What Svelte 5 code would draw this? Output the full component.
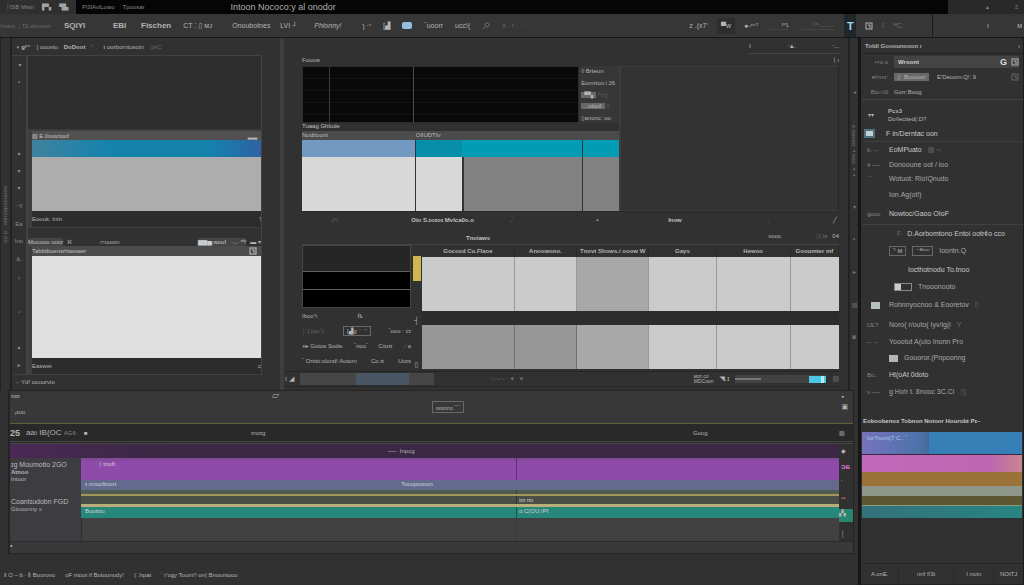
<script lang="ts">
  type Row = { lead: string; text: string; extra?: string; size: string; kind?: string };

  const columns = [
    { label: 'Gocosd Cu.Flaoe', width: 92, tone: 'light' },
    { label: 'Anoowono.', width: 62, tone: 'light' },
    { label: 'Tnovt Shows./ ooow W', width: 72, tone: 'mid' },
    { label: 'Gays', width: 67, tone: 'light' },
    { label: 'Hewoo', width: 74, tone: 'light' },
    { label: 'Gooumter mf', width: 48, tone: 'light' }
  ];
  const total = columns.reduce((sum, c) => sum + c.width, 0);

  const rows: Row[] = [
    { lead: '', text: 'F in/Derntac oon', size: 'h16', kind: 'active' },
    { lead: 'b.  –', text: 'EoMPuato', extra: '▧  ▫▫', size: 'h16', kind: 'bright' },
    { lead: '4 ──', text: 'Donooune oot / ioo', size: 'h14' },
    { lead: '  ·‾', text: 'Wotuot: Rio!Qnudo', size: 'h14' },
    { lead: '·', text: 'Ion.Ag(ot!)', size: 'h18' },
    { lead: 'gooo', text: 'Nowtoc/Gaoo OIoF', size: 'h20', kind: 'bright' },
    { lead: '', text: 'D.Aorbomtono Entoi ootr¢o cco', size: 'h18', kind: 'deep' },
    { lead: '', text: 'Ioontn.Q', size: 'h18', kind: 'chips' },
    { lead: '', text: 'Iocthotnodu To.tnoo', size: 'h20', kind: 'section' },
    { lead: '', text: 'Tnooonooto', size: 'h14', kind: 'toggle' },
    { lead: '', text: 'Rohnnyocnoo & Eooretov', extra: '▯', size: 'h22', kind: 'folder' },
    { lead: 'IJL?', text: 'Noro( r/outo( Iyv/ig(i', extra: 'Y', size: 'h18' },
    { lead: '–·  –', text: 'Yoootut A(uto Inonn Pro', size: 'h16' },
    { lead: '', text: 'Gouoror.(Pnpoonng', size: 'h16', kind: 'swatch' },
    { lead: 'Bo.:', text: 'Ht(oAt 0doto', size: 'h18', kind: 'bright' },
    { lead: 'x ──', text: 'g  Ho!r t. 8nooc 3C.Ci', extra: '▯|', size: 'h16' }
  ];

  const footer = ['‖ O – b · ⦀  Boorovo', 'oF ntoot if Botounody!', '(˙.hpat', "‘ r'ogy  Toum!! on( Bnoontooo"];

  let shot = $state('Wroont');
</script>

{#snippet box()}
  <svg class="ico" viewBox="0 0 8 8" aria-hidden="true"><rect x="1" y="1" width="6" height="6" /><path d="M3 3h2v3" /></svg>
{/snippet}

<div class="app">
  <header class="titlebar">
    <div class="corner"><span>┆ISB Mstn</span><b>▛▚</b><b>▜▙</b></div>
    <span class="menu">Pi3lAvlLowo</span><span class="menu">Tpoosar</span>
    <h1>Intoon Nococo:y al onodor</h1>
    <div class="corner end"><span>▴</span><span>≡</span></div>
  </header>

  <nav class="toolbar">
    <div class="tools">
      <span class="dim lead-in">Inosuo, ┆ TE ottonoonr</span>
      <button class="strong w46">SQIYI</button>
      <button class="strong w24">EBI</button>
      <button class="strong">Fischen</button>
      <button class="w46">CT ⁚ ▯ ᴍᴊ</button>
      <button class="w40">Onoubotnes</button>
      <button class="w28">LVI ┘</button>
      <button class="w40"><em>Phionny!</em></button>
      <button>ɿ ·ᵛ</button>
      <button>[▟</button>
      <button class="chip" aria-label="View"></button>
      <button>‾uoorr</button>
      <button>ucc!(</button>
      <button class="dim">
        <svg class="ico" viewBox="0 0 8 8" aria-hidden="true"><circle cx="5" cy="3" r="2" /><path d="M4 4L1 7" /></svg>
      </button>
      <span class="dim">x . › ː ː ː</span>
    </div>
    <div class="tools right">
      <button>z .(x7‘</button>
      <button class="tile">▀w</button>
      <button>●‑ᶜˢᵀ</button>
      <button class="field">ʸᶻʟ</button>
      <button class="field dim">˥ᵒᴸ.,…‑˙</button>
      <button class="cyan">T</button>
      <button>{@render box()}</button>
      <button>⫶</button>
      <button class="dim">ᴹC‥·</button>
      <div class="toolend"><span>ı</span><span>ᴍ</span></div>
    </div>
  </nav>

  <div class="body">
    <main>
      <div class="panels">
        <div class="rail"><span>oonosodoouoo · o oo</span></div>
        <section class="source">
          <div class="tabs"><b>◖ ɡᶜ⁺</b><span>[ ooovto</span><b>DoDoot</b><span class="dim">ᴸ‧.</span><span>ɪ oorborntosotn</span><span class="dim">▯AC</span></div>
          <div class="gutter">
            <span>˙▾</span><span>▪</span><span>:</span><span></span><span></span><span>▴</span><span>▾</span><span>▾</span><span>⊣I</span><span>Ea</span><span>Ino</span><span>&.</span>
            <span>ᵧ</span><span></span><span>▫</span><span></span><span>▴</span><span>▸</span>
          </div>
          <div class="stack">
            <div class="empty"></div>
            <article class="card">
              <h2><span>▧ E.ilnotctoof</span><i>▂▂</i></h2>
              <div class="band blue"></div>
              <div class="slab grey"></div>
              <p><span>Eoouk. Inin</span><span>˥</span></p>
            </article>
            <div class="bar">
              <button class="grow">Mooooo ooor</button><span>ℵ</span>
              <button class="wide">▱ouom</button>
              <button class="lit">▆▆▅.wouf &nbsp; ·‥· ᵒᵗʸ</button><span>▬ ▾</span>
            </div>
            <article class="card">
              <h2 class="plain"><span>Tabbtboensrhteower</span><i>{@render box()}</i></h2>
              <div class="slab white"></div>
              <p><span>Easwet</span><span>c</span></p>
            </article>
          </div>
          <div class="foot"><span class="dim">⌐</span> Yd! ooourvio</div>
        </section>

        <section class="viewer">
          <div class="viewtabs"><span>ı</span><span>·▴.</span><span>·‥</span></div>
          <div class="title"><h2>Fooow</h2><span>⟨ ı</span></div>
          <div class="stage">
            <div class="seq">
              <div class="monitor">
                <div class="black"></div>
                <div class="opts">
                  <button>◊ Brteon</button>
                  <button>Eomrton.i 26</button>
                  <div><button class="on" aria-label="Fit">▀▚</button> <span class="dim">ᴰ▱▯</span></div>
                  <div><button class="on">‥obotf</button> <span class="dim">▯</span></div>
                  <button>▯anonc: oo</button>
                </div>
              </div>
              <h3>Tuaag Ghlode</h3>
              <div class="clips heads"><span>Nodttoont</span><span>OlIUDTIv</span><span></span><span></span></div>
              <div class="clips bands"><span></span><span></span><span></span><span></span></div>
              <div class="clips slabs"><span></span><span></span><span></span><span></span></div>
            </div>
            <div class="void"></div>
          </div>
          <div class="caption"><span class="dim">◸i</span><b>Oio S.ɪoɪoɪ Mvlca0o.o</b><span>.ʿ</span><span>▪</span><b>Inow</b><span class="dim">.</span><span class="dim">‸</span><span>╱</span></div>
          <div class="caption second"><b>Tnoiaws</b><span>vooo &nbsp; <span class="dim">▯l.Iʙ</span> &nbsp; 04</span></div>
          <div class="lower">
            <div class="levels">
              <div class="scope"><i></i><i></i></div>
              <div class="line first"><span>Ibooˢi</span><span>℞</span></div>
              <div class="line"><span class="dim">│ [.(ᴏᴏ⁷)·</span><button class="outline">[▟g ⁻ ˙˹</button><span>‾ooo ⸱ ᴄɪ</span></div>
              <div class="line"><span>◖▸ Gotos Sode.</span><span>‾noo‾</span><span>Cɪuɪɪ</span><span>.‧ ɕ</span></div>
              <div class="line"><span>‾ Ortist:olond! Autom</span><span>Co.ɪt</span><span>Uoɪs</span></div>
            </div>
            <div class="meter"><i></i><span>┤</span><span>▯</span></div>
            <table>
              <thead>
                <tr>
                  {#each columns as c}
                    <th style={`width:${(c.width / total) * 100}%`}>{c.label}</th>
                  {/each}
                </tr>
              </thead>
              <tbody>
                <tr>{#each columns as c}<td class={c.tone}></td>{/each}</tr>
                <tr class="spacer"><td colspan="6"></td></tr>
                <tr class="short">{#each columns as c, i}<td class={i < 2 ? 'dark' : c.tone}></td>{/each}</tr>
              </tbody>
            </table>
          </div>
          <div class="strip">
            <span>ı ◢</span>
            <div class="scrub"><i></i></div>
            <span class="ticks dim">·‑·‑·‑ · ▾ &nbsp; ▾</span>
            <span class="small">ᴍᴏɪ ᴄᴏ<br />MDCoon</span>
            <span>◥.ɪ</span>
            <div class="slider"><i></i><button aria-label="Zoom"></button></div>
            <span class="dim">▧</span>
          </div>
        </section>
        <div class="rail edge">
          <span>◂</span><span>‧ o ooooo ▪ooo ▪▪</span><span>▾</span><span>▪</span><span>▸</span><span>▧</span><span>◙</span>
        </div>
      </div>

      <section class="timeline">
        <div class="tlhead">
          <span class="tag">ɪɴᴅ<br /><br />˙ ᵧɪoo</span>
          <button class="outline">ooonno.<sup>──</sup></button>
          <span class="speech">▱</span>
          <span class="end"><span>▪</span><span>▣</span></span>
        </div>
        <div class="ruler">
          <b>25</b><span class="time">aaı IB(OC <small>AG6ː</small></span><i>■</i><span>ɪnoɪɡ</span><span>Goog</span><em>▧</em>
        </div>
        <div class="tracks">
          <div class="purplehead"><span>── &nbsp;Inpcɡ</span></div>
          <div class="labels">
            <h4>ɪɡ Moumotio 2GO</h4>
            <b>Atnoo</b>
            <small>Intoor</small>
            <h4 class="next">Coantɪudobn FGD</h4>
            <small>Gtooonny x</small>
          </div>
          <div class="lanes">
            <div class="lane magenta"><span>⟨ ɪnoft</span><span></span></div>
            <div class="lane slate"><span>ɪ nnoofɪoort</span><span class="inset">Tooupoɪoon</span></div>
            <div class="lane olive"><span></span><span></span></div>
            <div class="lane moss"><span></span><span>ɪɪo ɪɪo</span></div>
            <div class="lane teal"><span>Buottɪu</span><span>ɑ C(OU:/Pf</span></div>
            <div class="lane rest"><span></span><span></span></div>
          </div>
          <div class="side"><b>◆</b><b class="pink">ɔɕ</b><span>ʹ</span><b class="red">▪▪</b><b class="green">▞▖</b><span>│</span></div>
        </div>
        <div class="tlfoot">•</div>
      </section>

      <footer>{#each footer as item}<span>{item}</span>{/each}</footer>
    </main>

    <aside>
      <header class="insp"><h2>Toldl Gooounooon ı</h2><span>ı</span></header>
      <div class="form">
        <label for="shot">•ᴛᴏ.ᴏ</label>
        <div class="inputwrap"><input id="shot" bind:value={shot} /><b>G</b>{@render box()}</div>
        <span>ʀlᴛɪᴀɪ:</span>
        <div class="pair"><button class="on">▯˙ Boooos!</button><button>E'Deoom:Q!: 9</button><i>{@render box()}</i></div>
        <span>Bto:n0</span>
        <button>Gorr:Boog</button>
      </div>
      <div class="group"><span>▾▾</span><p><b>Pcs3</b><br />Do/lectted(:D?</p></div>
      <ul>
        {#each rows as row}
          <li class="{row.size} {row.kind ?? ''}">
            {#if row.kind === 'active'}
              <span class="lead"><i class="thumb"></i></span>
            {:else if row.kind === 'folder'}
              <span class="lead"><i class="folderbox"></i></span>
            {:else}
              <span class="lead">{row.lead}</span>
            {/if}
            {#if row.kind === 'deep'}<span class="dim">F</span>{/if}
            {#if row.kind === 'chips'}<button class="outline">'ᴵ ᴍ</button><button class="outline">⁻ᴮᵒᵒᶦ</button>{/if}
            {#if row.kind === 'toggle'}<button class="switch" aria-label={row.text}><i></i></button>{/if}
            {#if row.kind === 'swatch'}<i class="swatchbox"></i>{/if}
            <span>{row.text}</span>
            {#if row.extra}<span class="dim">{row.extra}</span>{/if}
          </li>
        {/each}
      </ul>
      <h3>Eoboobenox Tobnon Notoor Hourobt Pɪ–</h3>
      <div class="swatches">
        <div class="sky"><span>Ior?nont(7 C.. ‾</span></div>
        <div class="pinkbar"></div>
        <div class="amber"></div>
        <div class="sage"></div>
        <div class="khaki"></div>
        <div class="sea"></div>
      </div>
      <div class="actions"><button>A onE.</button><button>nnf f/3t</button><button>I notn</button><button>NOtTJ</button></div>
    </aside>
  </div>
</div>

<style>
  :global(body) { background: #313131; }
  .app { --line: #222; display: flex; flex-direction: column; min-height: 100vh; background: #313131; color: #b4b4b4; font: 7px/8px "Liberation Sans", "DejaVu Sans", sans-serif; overflow: hidden; }
  h1, h2, h3, h4, p, ul { margin: 0; padding: 0; font-size: inherit; font-weight: normal; }
  .app * { box-sizing: border-box; }
  .app span, .app button, .app h2, .app h3 { white-space: nowrap; }
  button, input { border: 0; padding: 0; background: none; color: inherit; font: inherit; }
  .dim { color: #6c6c6c; }
  .ico { width: 8px; height: 8px; display: block; fill: none; stroke: currentColor; stroke-width: 1; }
  .outline { border: 1px solid #686868; padding: 0 3px; }
  .on { background: #686868; padding: 0 3px; }

  .titlebar { display: flex; align-items: center; height: 14px; background: #050505; }
  .titlebar h1 { margin-left: 78px; font-size: 9px; color: #b0b0b0; white-space: nowrap; }
  .menu { margin-right: 8px; font-size: 6px; color: #8a8a8a; }
  .corner { display: flex; align-items: center; gap: 8px; width: 76px; height: 14px; margin-right: 6px; padding-left: 6px; background: #2f2f2f; color: #858585; font-size: 6px; }
  .corner b { color: #a5a5a5; }
  .corner.end { margin: 0 0 0 auto; padding-left: 38px; gap: 26px; background: #292929; }

  .toolbar { display: flex; justify-content: space-between; height: 24px; background: #363636; border-bottom: 1px solid #181818; }
  .tools { display: flex; align-items: center; gap: 12px; }
  .tools.right { gap: 9px; }
  .tools button { text-align: left; }
  .tools .strong { font-size: 8px; font-weight: bold; }
  .tools .lead-in { width: 52px; font-size: 5px; }
  .w46 { width: 37px; }
  .w40 { width: 36px; }
  .w28 { width: 22px; }
  .w24 { width: 16px; }
  .chip { width: 10px; height: 7px; border-radius: 2px; background: #94bede; }
  .tile { padding: 4px; background: #2d2d2d; }
  .field { border-bottom: 1px solid #444; padding-left: 14px; }
  .tools .cyan { width: 12px; height: 23px; background: #20272b; color: #a0d8ec; font-size: 11px; font-weight: bold; text-align: center; }
  .toolend { display: flex; align-items: center; justify-content: space-between; width: 92px; height: 100%; margin-left: 14px; padding: 0 2px 0 54px; border-left: 1px solid #1b1b1b; }

  .body { flex: 1; display: grid; grid-template-columns: minmax(0, 1fr) 163px; }
  main { display: flex; flex-direction: column; border-right: 3px solid #171717; }
  .panels { display: grid; grid-template-columns: 12px minmax(0, 272fr) minmax(0, 564fr) 10px; }
  .rail { display: flex; align-items: center; justify-content: center; border: solid var(--line); border-width: 0 2px 0 1px; color: #777; font-size: 6px; }
  .rail span { writing-mode: vertical-rl; }
  .rail.edge { flex-direction: column; gap: 26px; border-width: 0 0 0 2px; }

  .source { display: grid; grid-template: 18px 1fr 16px / 14px 1fr; padding-right: 18px; border-right: 4px solid #3e3e3e; font-size: 6px; }
  .tabs { grid-column: 1 / 3; display: flex; align-items: center; gap: 6px; padding-left: 4px; border-bottom: 1px solid #424242; }
  .gutter { display: flex; flex-direction: column; justify-content: space-around; align-items: center; color: #8d8d8d; }
  .gutter span { height: 8px; }
  .stack { border: solid #434343; border-width: 0 1px 0 2px; }
  .empty { height: 75px; background: #2d2d2d; border-bottom: 2px solid #3d3d3d; }
  .card { background: #2c2c2c; border-left: 4px solid #3f3f3f; }
  .card h2 { display: flex; justify-content: space-between; align-items: center; height: 9px; padding-right: 4px; background: #535150; color: #c2c2c2; }
  .card h2.plain { height: 10px; background: #4c4c4c; }
  .card p { display: flex; justify-content: space-between; align-items: center; height: 16px; }
  .band { height: 17px; }
  .blue { background: linear-gradient(90deg, #3f829e, #1383ae 35% 77%, #2e62a2); }
  .slab.grey { height: 54px; background: #adadad; }
  .slab.white { height: 102px; background: #e0e0e0; }
  .bar { display: flex; align-items: flex-end; gap: 4px; height: 19px; border-top: 1px solid #3e3e3e; }
  .bar button { text-align: left; }
  .bar .grow { background: #454545; color: #c0c0c0; }
  .bar .wide { flex: 1; padding-left: 24px; }
  .bar .lit { background: #454545; color: #ccc; }
  .foot { grid-column: 1 / 3; padding: 3px 0 0 4px; border-top: 1px solid #3f3f3f; }

  .viewer { display: flex; flex-direction: column; padding: 0 9px 0 18px; }
  .viewtabs { display: flex; align-self: flex-end; justify-content: space-between; align-items: center; width: 90px; height: 16px; border-bottom: 1px solid #484848; }
  .title { display: flex; justify-content: space-between; align-items: center; height: 12px; font-size: 6px; }
  .stage { display: grid; grid-template-columns: minmax(0, 316fr) minmax(0, 219fr); }
  .void { border: solid #3d3d3d; border-width: 1px 1px 1px 2px; border-right-color: #262626; background: #333; }
  .monitor { display: grid; grid-template-columns: minmax(0, 1fr) 40px; height: 57px; }
  .black { border: 1px solid #2c2c2c; background: linear-gradient(90deg, transparent 26px, #3c3c3c 26px 27px, transparent 27px 110px, #4c4c4c 110px 111px, transparent 111px), repeating-linear-gradient(#090909 0 11px, #131313 11px 12px); }
  .opts { display: flex; flex-direction: column; justify-content: space-between; align-items: flex-start; padding: 1px 2px; background: #373737; font-size: 6px; }
  .opts .on { line-height: 6px; }
  .seq h3 { height: 8px; line-height: 7px; color: #c0c0c0; font-size: 6px; }
  .clips { display: grid; grid-template-columns: 112fr 47fr 119fr 37fr; }
  .clips span + span { border-left: 1px solid #333; }
  .heads { height: 9px; background: #4b4b4b; color: #bbb; font-size: 6px; }
  .heads span + span { border-color: transparent; }
  .bands { height: 17px; }
  .bands span { background: #029cb5; }
  .bands span:nth-child(1) { background: #7199c1; }
  .bands span:nth-child(2) { background: #078ea8; }
  .bands span:nth-child(3) { border: 0; }
  .slabs { height: 54px; }
  .slabs span { background: #828282; }
  .slabs span:nth-child(-n + 2) { background: #d8d8d8; }
  .slabs span:nth-child(3) { border-left-width: 2px; }
  .caption { display: grid; grid-template-columns: 108fr 98fr 85fr 71fr 73fr 25fr 65fr 6px; align-items: center; height: 17px; border-top: 1px solid #292929; white-space: nowrap; font-size: 6px; }
  .caption b { color: #c0c0c0; }
  .caption span:first-child { padding-left: 30px; }
  .caption.second { grid-template-columns: minmax(0, 1fr) auto; height: 16px; border: 0; }
  .caption.second b { padding: 4px 0 0 164px; }
  .lower { display: grid; grid-template-columns: 109px 11px minmax(0, 1fr); border-top: 1px solid #434343; }
  .scope { height: 63px; padding-top: 25px; border: 1px solid #464646; background: #262626; }
  .scope i { display: block; height: 18px; background: #000; border-top: 1px solid #606060; }
  .line { display: flex; justify-content: space-between; align-items: center; height: 15px; font-size: 6px; }
  .line.first { padding-right: 48px; }
  .meter { display: flex; flex-direction: column; align-items: center; justify-content: space-between; padding-top: 11px; }
  .meter i { width: 8px; height: 25px; background: #cfb64e; }
  table { width: 100%; border-collapse: collapse; table-layout: fixed; }
  th { height: 12px; padding: 0; font-size: 6px; font-weight: bold; text-align: center; border-right: 1px solid #292929; white-space: nowrap; }
  td { height: 54px; padding: 0; border-right: 1px solid #999; }
  td:last-child { border-right: 0; }
  .short td { height: 44px; }
  .spacer td { height: 14px; background: #2c2c2c; }
  .light { background: #cbcbcb; }
  .mid { background: #a8a8a8; }
  .dark { background: #979797; border-color: #707070; }
  .strip { display: flex; align-items: center; gap: 6px; height: 16px; margin: 2px 0 0 -17px; border: solid #252525; border-width: 1px 0; }
  .scrub { width: 134px; height: 12px; padding-left: 56px; background: #464646; }
  .scrub i { display: block; width: 53px; height: 12px; background: #485664; }
  .ticks { flex: 1; padding-left: 50px; }
  .small { font-size: 5px; line-height: 5px; }
  .slider { display: flex; align-items: center; justify-content: space-between; width: 91px; height: 8px; background: #424242; }
  .slider i { width: 26px; height: 2px; background: #777; }
  .slider button { width: 17px; height: 7px; background: linear-gradient(90deg, #4bc7e6 70%, #b2edf6 70% 90%, #4bc7e6 90%); }

  .timeline { margin: 0 4px 0 8px; border: solid #242424; border-width: 1px 1px 1px 2px; background: #383838; }
  .tlhead { display: grid; grid-template-columns: 262px minmax(0, 1fr) auto; height: 33px; border-bottom: 1px solid #60603a; }
  .tag { padding: 1px; font-size: 6px; }
  .tlhead .outline { justify-self: start; align-self: center; margin-left: 160px; grid-area: 1 / 2; font-size: 5px; }
  .speech { grid-area: 1 / 2; font-size: 9px; }
  .tlhead .end { display: flex; flex-direction: column; gap: 2px; padding: 2px 5px 0 0; }
  .ruler { display: grid; grid-template-columns: 16px 58px 167px 442px minmax(0, 1fr) 14px; align-items: center; height: 20px; background: #292929; border-bottom: 3px double #454541; font-size: 6px; }
  .ruler b { font-size: 9px; }
  .ruler .time { font-size: 8px; }
  .ruler small { font-size: 6px; color: #888; }
  .tracks { display: grid; grid-template: 14px 1fr / 71px minmax(0, 1fr) 14px; font-size: 6px; }
  .purplehead { grid-column: 1 / 3; background: linear-gradient(90deg, #4a2855, #3a2845 20%); padding: 3px 0 0 378px; }
  .labels { padding: 2px 0 0 1px; background: #3d3d41; }
  .labels h4 { font-size: 7px; line-height: 9px; white-space: nowrap; color: #bbb; }
  .labels b, .labels small { display: block; font-size: 6px; line-height: 7px; }
  .labels .next { margin-top: 14px; }
  .lane { display: grid; grid-template-columns: 435fr 323fr; color: #d2cfd6; }
  .lane span { padding-left: 4px; }
  .lane span + span { border-left: 1px solid #0005; padding-left: 2px; }
  .lane .inset { border-left: 0; }
  .magenta { height: 22px; background: linear-gradient(#7c4a91, #8f4aaa 4px); }
  .magenta span { padding: 2px 0 0 18px; }
  .slate { height: 10px; background: #646a8d; grid-template-columns: 318fr 440fr; }
  .olive { height: 6px; background: #505b51; border-bottom: 2px solid #a3975a; }
  .moss { height: 8px; background: #4a4e47; font-size: 5px; }
  .teal { height: 14px; border-top: 3px solid #b6b078; background: #28877b; }
  .rest { height: 23px; background: #414141; border-left: 1px solid #303030; }
  .rest span + span { border-left-color: #3a3a3a; }
  .side { grid-area: 1 / 3 / 3 / 4; display: flex; flex-direction: column; justify-content: space-between; padding: 3px 0 3px 2px; background: #303030; }
  .pink { color: #db72d4; font-size: 8px; }
  .red { color: #cc6b6b; }
  .green { height: 13px; margin-left: -2px; background: #26866e; }
  .tlfoot { height: 12px; border-top: 1px solid #2b2b2b; background: #393939; }
  footer { flex: 1; display: flex; align-items: center; gap: 10px; padding: 10px 4px 0; font-size: 6px; }

  aside { display: flex; flex-direction: column; min-width: 0; border-right: 1px solid #1c1c1c; padding-left: 1px; font-size: 6px; }
  .insp { display: flex; justify-content: space-between; align-items: center; height: 16px; padding: 0 3px; border-bottom: 1px solid #222; }
  .form { display: grid; grid-template-columns: 24px minmax(0, 1fr); grid-auto-rows: 15px; align-items: center; gap: 0 6px; padding: 0 4px 0 2px; border-bottom: 1px solid #434343; }
  .form > label, .form > span { text-align: right; color: #858585; }
  .form button { justify-self: start; }
  .inputwrap { display: flex; align-items: center; gap: 4px; height: 12px; background: #444; }
  .inputwrap input { flex: 1; min-width: 0; padding-left: 4px; color: #d0d0d0; font-weight: bold; }
  .inputwrap b { color: #ddd; font-size: 9px; }
  .pair { display: flex; align-items: center; gap: 8px; }
  .pair i { margin-left: auto; color: #666; }
  .group { display: grid; grid-template-columns: 20px 1fr; align-items: center; height: 25px; margin-top: 1px; padding: 2px 0 0 6px; }
  ul { list-style: none; }
  li { display: flex; align-items: center; gap: 6px; padding-left: 5px; color: #a8a8a8; font-size: 7px; }
  .lead { width: 16px; color: #888; white-space: pre; font-size: 6px; }
  .h14 { height: 14px; }
  .h16 { height: 16px; }
  .h18 { height: 18px; }
  .h20 { height: 20px; }
  .h22 { height: 22px; }
  .bright, .active { color: #cacaca; }
  .active { padding-left: 2px; border-bottom: 1px solid #3e3e3e; }
  .thumb { display: block; width: 11px; height: 9px; border: 2px solid #4e7280; background: #c2d2d7; }
  .folderbox { display: block; width: 9px; height: 7px; margin-left: 4px; background: #b5c0be; }
  .deep { padding-left: 13px; border-top: 1px solid #404040; }
  .deep, .section { color: #cacaca; }
  .section { padding-left: 24px; }
  .toggle { padding-left: 10px; }
  .switch { width: 18px; height: 8px; border: 1px solid #888; }
  .switch i { display: block; width: 6px; height: 6px; background: #ccc; }
  .swatchbox { width: 9px; height: 7px; background: #b4b4b4; }
  aside h3 { margin-top: auto; padding: 4px 1px; color: #c8c8c8; font-size: 6px; }
  aside h3, .insp h2 { font-weight: bold; }
  .swatches { margin: 3px 1px 0 0; }
  .sky { height: 23px; padding: 2px 5px; color: #a9cee5; background: linear-gradient(90deg, #7772bd, #4d73aa 35%, #456a9a 42%, #3780b7 42%); border-bottom: 1px solid #3c2440; }
  .pinkbar { height: 17px; background: linear-gradient(90deg, #c169bc, #bd67b0 80%, #c9858d); }
  .amber { height: 14px; background: #9b7339; }
  .sage { height: 10px; background: #8e9789; }
  .khaki { height: 9px; background: #5d5733; }
  .sea { height: 13px; border-top: 1px solid #899b7e; background: linear-gradient(90deg, #34717c, #288580); }
  .actions { display: grid; grid-template-columns: 36fr 56fr 40fr 30fr; height: 22px; margin-top: 45px; border: solid #252525; border-width: 1px 0; }
  .actions button + button { border-left: 1px solid #2a2a2a; }
</style>
